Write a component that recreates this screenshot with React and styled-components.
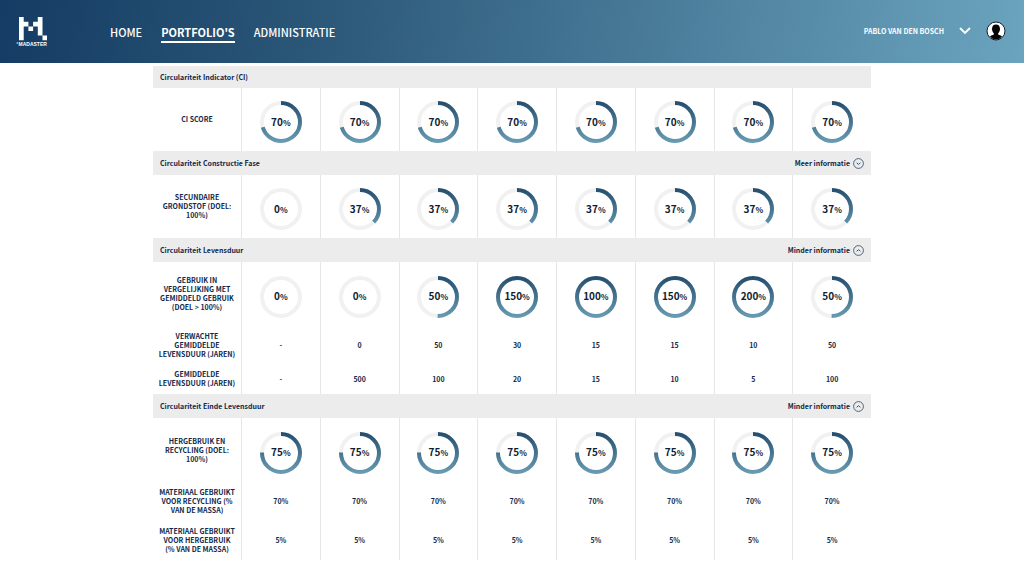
import React, { useState } from "react";
import styled, { createGlobalStyle } from "styled-components";

const GlobalStyle = createGlobalStyle`
  * {
    box-sizing: border-box;
  }

  body {
    margin: 0;
    background: #fff;
    color: #12294b;
    font-family: "Noto Sans CJK SC", "Open Sans", sans-serif;
  }
`;

const Header = styled.header`
  display: flex;
  align-items: center;
  height: 63px;
  padding: 0 18px 0 16px;
  color: #fff;
  background: linear-gradient(97deg, #153c64 0%, #2a5677 30%, #6ba4bf 100%);
`;

const LogoLink = styled.a`
  display: block;
  height: 32px;
  margin-right: 62px;
`;

const Nav = styled.nav`
  display: flex;
  gap: 19px;
`;

const NavLink = styled.a`
  padding-top: 2px;
  border-bottom: 2px solid ${(props) => (props.$active ? "#fff" : "transparent")};
  color: #fff;
  font-size: 11px;
  font-weight: ${(props) => (props.$active ? 700 : 500)};
  line-height: 18px;
  text-decoration: none;
`;

const UserButton = styled.button`
  display: flex;
  align-items: center;
  gap: 15px;
  margin-left: auto;
  padding: 0 0 2px;
  border: 0;
  background: none;
  color: #fff;
  font-family: inherit;
  font-size: 7px;
  font-weight: 700;
  line-height: 20px;
  cursor: pointer;
`;

const Main = styled.main`
  padding: 3px 153px 11px;
`;

const Table = styled.table`
  width: 100%;
  table-layout: fixed;
  border-collapse: separate;
  border-spacing: 0;
`;

const LabelCol = styled.col`
  width: 88px;
`;

const SectionCell = styled.th`
  height: ${(props) => props.$height}px;
  padding: 0 7px;
  background: #ececec;
`;

const SectionBar = styled.div`
  display: flex;
  align-items: center;
  justify-content: space-between;
  font-size: 7px;
  line-height: 12px;
`;

const MoreButton = styled.button`
  display: flex;
  align-items: center;
  gap: 3px;
  padding: 0;
  border: 0;
  background: none;
  color: inherit;
  font: inherit;
  cursor: pointer;
`;

const LabelCell = styled.th`
  height: ${(props) => props.$height}px;
  padding: 0 5px;
  font-size: 7px;
  font-weight: 700;
  line-height: 9px;
  text-align: center;
  text-transform: uppercase;
`;

const ValueCell = styled.td`
  padding: 0;
  border-left: 1px solid #e6e6e6;
  font-size: 7px;
  font-weight: 700;
  line-height: 9px;
  text-align: center;
`;

const GaugeBox = styled.div`
  display: grid;
  place-items: center;
  padding-top: 5px;

  > * {
    grid-area: 1 / 1;
  }
`;

const GaugeValue = styled.span`
  color: #101d33;
  font-size: 10px;
  line-height: 14px;

  small {
    font-size: 8px;
  }
`;

const repeat = (value) => Array(8).fill(value);

const sections = [
  {
    title: "Circulariteit Indicator (CI)",
    barHeight: 22,
    rows: [{ label: "CI score", height: 63, gauge: true, values: repeat(70) }],
  },
  {
    title: "Circulariteit Constructie Fase",
    barHeight: 24,
    more: true,
    rows: [
      {
        label: "Secundaire grondstof (doel: 100%)",
        height: 63,
        gauge: true,
        values: [0, 37, 37, 37, 37, 37, 37, 37],
      },
    ],
  },
  {
    title: "Circulariteit Levensduur",
    barHeight: 24,
    more: true,
    open: true,
    rows: [
      {
        label: "Gebruik in vergelijking met gemiddeld gebruik (doel > 100%)",
        height: 64,
        gauge: true,
        values: [0, 0, 50, 150, 100, 150, 200, 50],
      },
      {
        label: "Verwachte gemiddelde levensduur (jaren)",
        height: 38,
        values: ["-", 0, 50, 30, 15, 15, 10, 50],
      },
      {
        label: "Gemiddelde levensduur (jaren)",
        height: 30,
        values: ["-", 500, 100, 20, 15, 10, 5, 100],
      },
    ],
  },
  {
    title: "Circulariteit Einde Levensduur",
    barHeight: 24,
    more: true,
    open: true,
    rows: [
      {
        label: "Hergebruik en recycling (doel: 100%)",
        height: 64,
        gauge: true,
        values: repeat(75),
      },
      {
        label: "Materiaal gebruikt voor recycling (% van de massa)",
        height: 38,
        values: repeat("70%"),
      },
      {
        // keep "(% van" together
        label: "Materiaal gebruikt voor hergebruik (%\u00a0van de massa)",
        height: 40,
        values: repeat("5%"),
      },
    ],
  },
];

function Logo() {
  return (
    <svg width="32" height="32" viewBox="0 0 32 32" aria-label="Madaster">
      <path
        fill="#fff"
        d="M3 1h4.700v4.700h4.700v4.700h4.700V5.700h4.700V1h4.700v18.600h4.500v4.700h-4.500v-4.700h-4.700v-9.200h-4.700v4.600h-4.700v-4.600H7.700v13.900H3z"
      />
      <text
        x="2.5"
        y="30"
        fill="#fff"
        fontFamily="Liberation Sans, sans-serif"
        fontSize="5"
        fontWeight="700"
      >
        MADASTER
      </text>
      <circle cx="1.2" cy="27" r="0.7" fill="#fff" />
    </svg>
  );
}

function Avatar() {
  return (
    <svg width="20" height="20" viewBox="0 0 20 20" aria-hidden="true">
      <circle cx="10" cy="10" r="9" fill="#fff" stroke="#17222c" />
      <path
        fill="#050505"
        d="M10 3.400c2.500 0 4 1.600 3.900 4.100.3.200.3 1-.1 1.800-.3 1.400-.9 2.300-1.600 2.900v1.200c.9.700 2.700.9 3.900 2A8.600 8.600 0 0 1 10 18.600a8.600 8.600 0 0 1-6.100-3.200c1.200-1.100 3-1.300 3.900-2v-1.200c-.7-.6-1.300-1.500-1.600-2.900-.4-.8-.4-1.600-.1-1.800C6 5 7.500 3.400 10 3.400z"
      />
    </svg>
  );
}

function ToggleIcon({ open }) {
  return (
    <svg width="11" height="11" viewBox="0 0 11 11" fill="none" stroke="#3c5672">
      <circle cx="5.5" cy="5.5" r="4.9" strokeWidth="0.9" />
      <path d={open ? "M3.6 6.3l1.9-1.6 1.9 1.6" : "M3.6 4.8l1.9 1.6 1.9-1.6"} />
    </svg>
  );
}

function Gauge({ value }) {
  const length = 2 * Math.PI * 19;
  const filled = (Math.min(value, 100) / 100) * length;

  return (
    <GaugeBox>
      <svg width="42" height="42" viewBox="0 0 42 42" fill="none" aria-hidden="true">
        <defs>
          <linearGradient
            id="gauge"
            gradientUnits="userSpaceOnUse"
            x1="0"
            y1="0"
            x2="42"
            y2="0"
          >
            <stop offset="0" stopColor="#6a9db4" />
            <stop offset="1" stopColor="#234c6d" />
          </linearGradient>
        </defs>
        <g transform="rotate(-90 21 21)" strokeWidth="4">
          <circle cx="21" cy="21" r="19" stroke="#f1f1f1" />
          {value > 0 && (
            <circle
              cx="21"
              cy="21"
              r="19"
              stroke="url(#gauge)"
              strokeDasharray={`${filled} ${length}`}
            />
          )}
        </g>
      </svg>
      <GaugeValue>
        {value}
        <small>%</small>
      </GaugeValue>
    </GaugeBox>
  );
}

function Section({ section }) {
  const [open, setOpen] = useState(Boolean(section.open));
  const rows = open ? section.rows : section.rows.slice(0, 1);

  return (
    <tbody>
      <tr>
        <SectionCell colSpan={9} scope="rowgroup" $height={section.barHeight}>
          <SectionBar>
            {section.title}
            {section.more && (
              <MoreButton
                type="button"
                aria-expanded={open}
                onClick={() => setOpen(!open)}
              >
                {open ? "Minder informatie" : "Meer informatie"}
                <ToggleIcon open={open} />
              </MoreButton>
            )}
          </SectionBar>
        </SectionCell>
      </tr>
      {rows.map((row) => (
        <tr key={row.label}>
          <LabelCell scope="row" $height={row.height}>
            {row.label}
          </LabelCell>
          {row.values.map((value, i) => (
            <ValueCell key={i}>
              {row.gauge ? <Gauge value={value} /> : value}
            </ValueCell>
          ))}
        </tr>
      ))}
    </tbody>
  );
}

function App() {
  return (
    <>
      <GlobalStyle />
      <Header>
        <LogoLink href="#home">
          <Logo />
        </LogoLink>
        <Nav>
          <NavLink href="#home">HOME</NavLink>
          <NavLink href="#portfolios" $active>
            PORTFOLIO'S
          </NavLink>
          <NavLink href="#administratie">ADMINISTRATIE</NavLink>
        </Nav>
        <UserButton type="button">
          PABLO VAN DEN BOSCH
          <svg width="12" height="8" viewBox="0 0 12 8" fill="none" aria-hidden="true">
            <path d="M1 1l5 5 5-5" stroke="#fff" strokeWidth="1.8" />
          </svg>
          <Avatar />
        </UserButton>
      </Header>
      <Main>
        <Table>
          <colgroup>
            <LabelCol />
            <col span={8} />
          </colgroup>
          {sections.map((section) => (
            <Section key={section.title} section={section} />
          ))}
        </Table>
      </Main>
    </>
  );
}

export default App;
